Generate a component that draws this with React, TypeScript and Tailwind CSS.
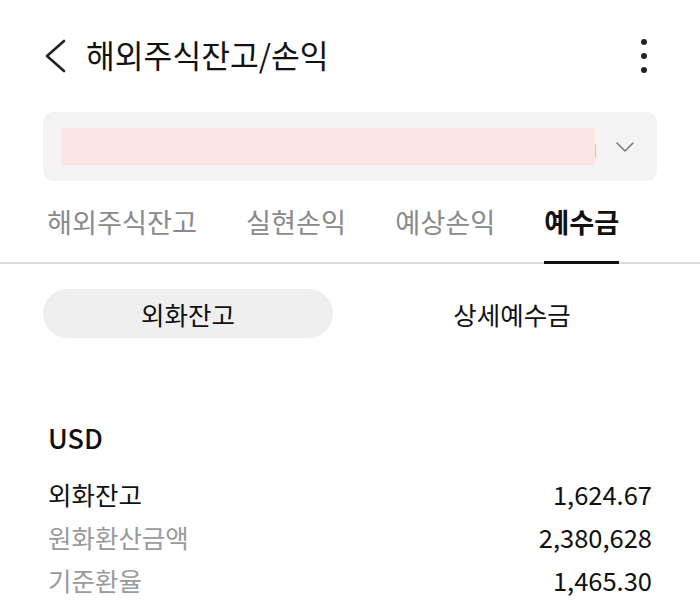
const tabs = ['해외주식잔고', '실현손익', '예상손익', '예수금'];
const rows = [
  { label: '외화잔고', value: '1,624.67', strong: true },
  { label: '원화환산금액', value: '2,380,628', strong: false },
  { label: '기준환율', value: '1,465.30', strong: false },
];

export default function App() {
  const active = 3;
  return (
    <div
      className="w-[700px] h-[601px] bg-white text-[#111] overflow-hidden"
      style={{ fontFamily: '"Noto Sans CJK KR", "Noto Sans", sans-serif' }}
    >
      <header className="h-[112px] flex items-center pl-[44px] pr-[53px]">
        <svg width="22" height="34" viewBox="0 0 22 34" fill="none" className="text-[#222]">
          <polyline points="20,2 3,17 20,32" stroke="currentColor" strokeWidth="2.6" strokeLinecap="round" strokeLinejoin="round" />
        </svg>
        <h1 className="ml-[20px] text-[31.3px] leading-none -mt-[2px]">해외주식잔고/손익</h1>
        <div className="ml-auto flex flex-col gap-[8px]">
          <span className="block w-[6px] h-[6px] rounded-full bg-[#222]" />
          <span className="block w-[6px] h-[6px] rounded-full bg-[#222]" />
          <span className="block w-[6px] h-[6px] rounded-full bg-[#222]" />
        </div>
      </header>

      <div className="mx-[43px] h-[69px] rounded-[10px] bg-[#f3f3f3] flex items-center pl-[18px] pr-[22px]">
        <div className="w-[534px] h-[37px] bg-[#fde4e4]" />
        <div className="w-px h-[14px] bg-[#c8c8c8] mt-[8px]" />
        <svg width="20" height="12" viewBox="0 0 20 12" fill="none" className="ml-auto text-[#7a7a7a]">
          <polyline points="2,2 10,10 18,2" stroke="currentColor" strokeWidth="1.6" strokeLinecap="round" strokeLinejoin="round" />
        </svg>
      </div>

      <nav className="h-[83px] flex items-stretch gap-[49px] pl-[47px] border-b-2 border-[#dcdcdc]">
        {tabs.map((t, i) => (
          <div key={t} className="flex flex-col">
            <div
              className={
                'flex-1 flex items-center pt-[1px] text-[27.2px] leading-none ' +
                (i === active ? 'font-bold text-[#111]' : 'text-[#8a8a8a]')
              }
            >
              {t}
            </div>
            <div className={'h-[3px] -mb-[2px] ' + (i === active ? 'bg-[#111]' : 'bg-transparent')} />
          </div>
        ))}
      </nav>

      <div className="mx-[43px] mt-[25px] grid grid-cols-2 gap-[34px] h-[49px] text-[25.5px] leading-none">
        <div className="rounded-full bg-[#efefef] flex items-center justify-center">외화잔고</div>
        <div className="flex items-center justify-center">상세예수금</div>
      </div>

      <section className="px-[48px] pt-[86px]">
        <div className="text-[27px] leading-none font-medium h-[26px]">USD</div>
        <div className="mt-[22px] flex flex-col">
          {rows.map((r) => (
            <div key={r.label} className="h-[43px] flex items-center justify-between text-[25.5px] leading-none">
              <span className={r.strong ? 'text-[#111]' : 'text-[#9a9a9a]'}>{r.label}</span>
              <span className="text-[#111]">{r.value}</span>
            </div>
          ))}
        </div>
      </section>
    </div>
  );
}
